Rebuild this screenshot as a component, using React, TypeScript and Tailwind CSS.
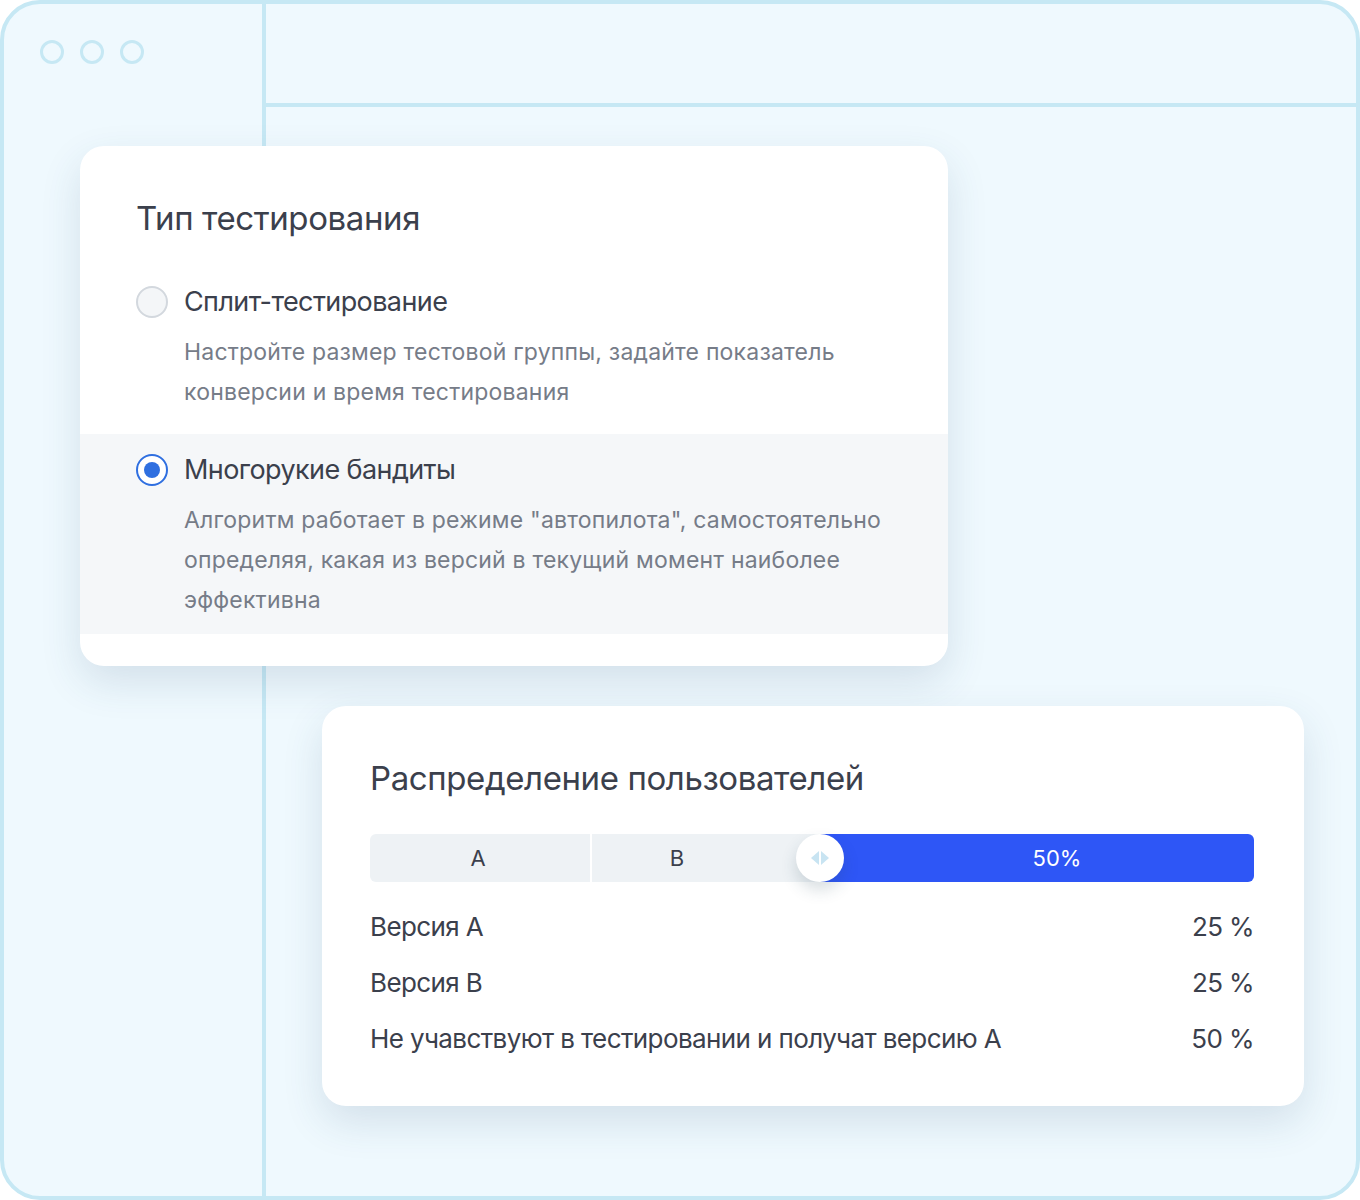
import React from 'react';

const font = {fontFamily: 'Inter, "Noto Sans", sans-serif'};

function Radio({checked}: {checked?: boolean}) {
  if (checked) {
    return (
      <span className="flex h-8 w-8 shrink-0 items-center justify-center rounded-full border-2 border-[#2f6fe0] bg-white">
        <span className="h-4 w-4 rounded-full bg-[#2f6fe0]" />
      </span>
    );
  }
  return <span className="h-8 w-8 shrink-0 rounded-full border-2 border-[#d3d8de] bg-[#f4f6f8]" />;
}

function Option({
  checked,
  label,
  lines,
  className,
}: {
  checked?: boolean;
  label: string;
  lines: string[];
  className: string;
}) {
  return (
    <div className={className}>
      <div className="flex h-8 items-center gap-4">
        <Radio checked={checked} />
        <span className="text-[27px] leading-8 tracking-[-0.6px] text-[#3b404c]">{label}</span>
      </div>
      <p className="mt-[14px] pl-12 text-[23px] leading-10 tracking-[0.2px] text-[#767c88]">
        {lines.map((l, i) => (
          <span key={i} className="block">
            {l}
          </span>
        ))}
      </p>
    </div>
  );
}

function Knob() {
  return (
    <div className="absolute left-[426px] top-0 flex h-12 w-12 items-center justify-center gap-[2px] rounded-full bg-white shadow-[0_8px_16px_rgba(40,70,90,0.18)]">
      <svg width="8" height="14" viewBox="0 0 8 14">
        <path d="M8 0 L0 7 L8 14 Z" fill="#c8e4f2" />
      </svg>
      <svg width="8" height="14" viewBox="0 0 8 14">
        <path d="M0 0 L8 7 L0 14 Z" fill="#c8e4f2" />
      </svg>
    </div>
  );
}

export default function App() {
  return (
    <div className="relative h-[1200px] w-[1360px] bg-white" style={font}>
      {/* window frame */}
      <div className="grid h-full w-full grid-cols-[258px_4px_1fr] overflow-hidden rounded-[40px] border-4 border-[#c6e8f4] bg-[#eff9fe]">
        <div className="flex gap-4 pl-9 pt-9">
          <span className="h-6 w-6 rounded-full border-[3px] border-[#c6e8f4]" />
          <span className="h-6 w-6 rounded-full border-[3px] border-[#c6e8f4]" />
          <span className="h-6 w-6 rounded-full border-[3px] border-[#c6e8f4]" />
        </div>
        <div className="bg-[#c6e8f4]" />
        <div className="grid grid-rows-[99px_4px_1fr]">
          <div />
          <div className="bg-[#c6e8f4]" />
          <div />
        </div>
      </div>

      {/* testing type card */}
      <div className="absolute left-[80px] top-[146px] w-[868px] rounded-3xl bg-white pb-8 pt-[52px] shadow-[0_16px_40px_rgba(40,80,110,0.14)]">
        <h2 className="px-14 text-[33px] leading-10 tracking-[-0.4px] text-[#3b404c]">Тип тестирования</h2>
        <Option
          className="mt-12 px-14 pb-[22px]"
          label="Сплит-тестирование"
          lines={['Настройте размер тестовой группы, задайте показатель', 'конверсии и время тестирования']}
        />
        <Option
          checked
          className="bg-[#f5f7f9] px-14 pb-[14px] pt-5"
          label="Многорукие бандиты"
          lines={[
            'Алгоритм работает в режиме "автопилота", самостоятельно',
            'определяя, какая из версий в текущий момент наиболее',
            'эффективна',
          ]}
        />
      </div>

      {/* distribution card */}
      <div className="absolute left-[322px] top-[706px] w-[982px] rounded-3xl bg-white pb-[49px] pl-12 pr-[50px] pt-[52px] shadow-[0_16px_40px_rgba(40,80,110,0.14)]">
        <h2 className="text-[33px] leading-10 tracking-[-0.4px] text-[#3b404c]">Распределение пользователей</h2>
        <div className="relative mt-9 flex h-12 text-[22px] text-[#3b404c]">
          <div className="flex w-[220px] items-center justify-center rounded-l-md bg-[#eef2f5] pr-1">A</div>
          <div className="ml-[2px] flex w-[228px] items-center justify-center bg-[#eef2f5] pr-[58px]">B</div>
          <div className="flex flex-1 items-center justify-center rounded-r-md bg-[#2e56f6] pl-10 text-white">
            50%
          </div>
          <Knob />
        </div>
        <div className="mt-[27px] flex flex-col gap-5 text-[26px] leading-9 tracking-[-0.6px] text-[#3b404c]">
          <div className="flex justify-between">
            <span>Версия А</span>
            <span>25 %</span>
          </div>
          <div className="flex justify-between">
            <span>Версия В</span>
            <span>25 %</span>
          </div>
          <div className="flex justify-between">
            <span>Не учавствуют в тестировании и получат версию А</span>
            <span>50 %</span>
          </div>
        </div>
      </div>
    </div>
  );
}
